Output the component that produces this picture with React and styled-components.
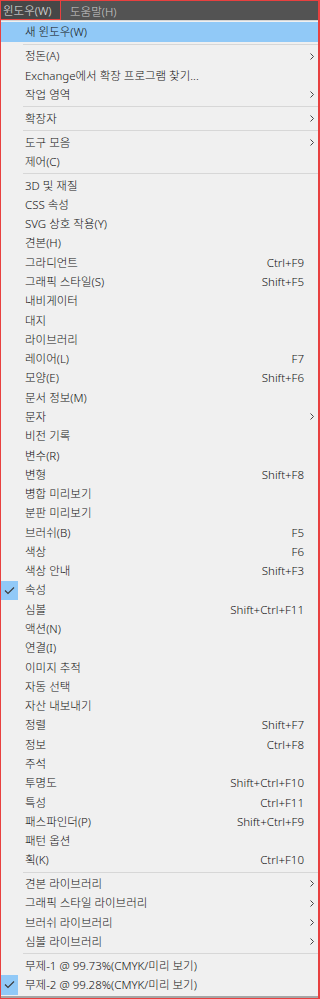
import React from "react";
import styled, { createGlobalStyle } from "styled-components";

// 윈도우 메뉴 항목 목록 ("sep" = 구분선)
const items = [
	{ label: "새 윈도우(W)", active: true },
	"sep",
	{ label: "정돈(A)", sub: true },
	{ label: "Exchange에서 확장 프로그램 찾기..." },
	{ label: "작업 영역", sub: true },
	"sep",
	{ label: "확장자", sub: true },
	"sep",
	{ label: "도구 모음", sub: true },
	{ label: "제어(C)" },
	"sep",
	{ label: "3D 및 재질" },
	{ label: "CSS 속성" },
	{ label: "SVG 상호 작용(Y)" },
	{ label: "견본(H)" },
	{ label: "그라디언트", key: "Ctrl+F9" },
	{ label: "그래픽 스타일(S)", key: "Shift+F5" },
	{ label: "내비게이터" },
	{ label: "대지" },
	{ label: "라이브러리" },
	{ label: "레이어(L)", key: "F7" },
	{ label: "모양(E)", key: "Shift+F6" },
	{ label: "문서 정보(M)" },
	{ label: "문자", sub: true },
	{ label: "비전 기록" },
	{ label: "변수(R)" },
	{ label: "변형", key: "Shift+F8" },
	{ label: "병합 미리보기" },
	{ label: "분판 미리보기" },
	{ label: "브러쉬(B)", key: "F5" },
	{ label: "색상", key: "F6" },
	{ label: "색상 안내", key: "Shift+F3" },
	{ label: "속성", checked: true },
	{ label: "심볼", key: "Shift+Ctrl+F11" },
	{ label: "액션(N)" },
	{ label: "연결(I)" },
	{ label: "이미지 추적" },
	{ label: "자동 선택" },
	{ label: "자산 내보내기" },
	{ label: "정렬", key: "Shift+F7" },
	{ label: "정보", key: "Ctrl+F8" },
	{ label: "주석" },
	{ label: "투명도", key: "Shift+Ctrl+F10" },
	{ label: "특성", key: "Ctrl+F11" },
	{ label: "패스파인더(P)", key: "Shift+Ctrl+F9" },
	{ label: "패턴 옵션" },
	{ label: "획(K)", key: "Ctrl+F10" },
	"sep",
	{ label: "견본 라이브러리", sub: true },
	{ label: "그래픽 스타일 라이브러리", sub: true },
	{ label: "브러쉬 라이브러리", sub: true },
	{ label: "심볼 라이브러리", sub: true },
	"sep",
	{ label: "무제-1 @ 99.73%(CMYK/미리 보기)" },
	{ label: "무제-2 @ 99.28%(CMYK/미리 보기)", checked: true },
];

const CheckIcon = () => (
	<svg width="11" height="9" viewBox="0 0 11 9">
		<path d="M1 4.5 L4 7.5 L10 1.5" fill="none" stroke="#3a3a3a" strokeWidth="1.1" />
	</svg>
);

const ArrowIcon = () => (
	<svg width="4" height="7" viewBox="0 0 4 7">
		<path d="M0.5 0.5 L3.5 3.5 L0.5 6.5" fill="none" stroke="#444" strokeWidth="1" />
	</svg>
);

const App = () => {
	return (
		<>
			<GlobalStyle />
			<Frame>
				<MenuBar>
					<MenuTitle $open>윈도우(W)</MenuTitle>
					<MenuTitle>도움말(H)</MenuTitle>
				</MenuBar>
				<Dropdown>
					{items.map((item, i) =>
						item === "sep" ? (
							<Separator key={i} />
						) : (
							<Row key={i} $active={item.active}>
								<CheckCell>
									{item.checked && (
										<CheckBox>
											<CheckIcon />
										</CheckBox>
									)}
								</CheckCell>
								<Label>{item.label}</Label>
								<Shortcut>{item.key}</Shortcut>
								<ArrowCell>{item.sub && <ArrowIcon />}</ArrowCell>
							</Row>
						)
					)}
				</Dropdown>
			</Frame>
		</>
	);
};

export default App;

const GlobalStyle = createGlobalStyle`
	body {
		margin: 0;
		background: #f0f0f0;
		font-family: "Noto Sans", "Noto Sans CJK KR", sans-serif;
	}
`;

const Frame = styled.div`
	width: 320px;
	height: 999px;
	box-sizing: border-box;
	border: 1px solid #e8403f;
	border-right-width: 2px;
	display: flex;
	flex-direction: column;
	background: #f0f0f0;
	overflow: hidden;
`;

const MenuBar = styled.div`
	height: 19px;
	background: #535353;
	display: flex;
	flex-shrink: 0;
`;

const MenuTitle = styled.div`
	display: flex;
	align-items: center;
	font-size: 11.5px;
	font-weight: 300;
	padding: ${(p) => (p.$open ? "0 4px 0 2px" : "0 8px 0 9px")};
	color: ${(p) => (p.$open ? "#e4e4e4" : "#cccccc")};
	background: ${(p) => (p.$open ? "#474747" : "transparent")};
	border-right: ${(p) => (p.$open ? "1px solid #e8403f" : "none")};
	border-bottom: ${(p) => (p.$open ? "1px solid #e8403f" : "none")};
	box-sizing: border-box;
	width: ${(p) => (p.$open ? "60px" : "auto")};
`;

const Dropdown = styled.div`
	flex: 1;
	border-top: 1px solid #d4d4d4;
	border-bottom: 2px solid #a6a6a6;
	padding-top: 1px;
	display: flex;
	flex-direction: column;
`;

const Row = styled.div`
	height: 19.29px;
	display: grid;
	grid-template-columns: 24px 1fr auto 14px;
	align-items: center;
	font-size: 11.5px;
	font-weight: 300;
	color: #111;
	background: ${(p) => (p.$active ? "#91c9f7" : "transparent")};
	flex-shrink: 0;
	&:first-child {
		height: 20px;
	}
`;

const CheckCell = styled.div`
	height: 100%;
	display: flex;
`;

const CheckBox = styled.div`
	width: 17px;
	height: 100%;
	background: #91c9f7;
	display: flex;
	align-items: center;
	justify-content: center;
`;

const Label = styled.span`
	white-space: nowrap;
	line-height: 1;
`;

const Shortcut = styled.span`
	white-space: nowrap;
	line-height: 1;
`;

const ArrowCell = styled.div`
	display: flex;
	align-items: center;
	justify-content: center;
	padding-left: 2px;
`;

const Separator = styled.div`
	height: 1px;
	background: #d7d7d7;
	margin: 1.75px 0 1.75px 22px;
	flex-shrink: 0;
`;
